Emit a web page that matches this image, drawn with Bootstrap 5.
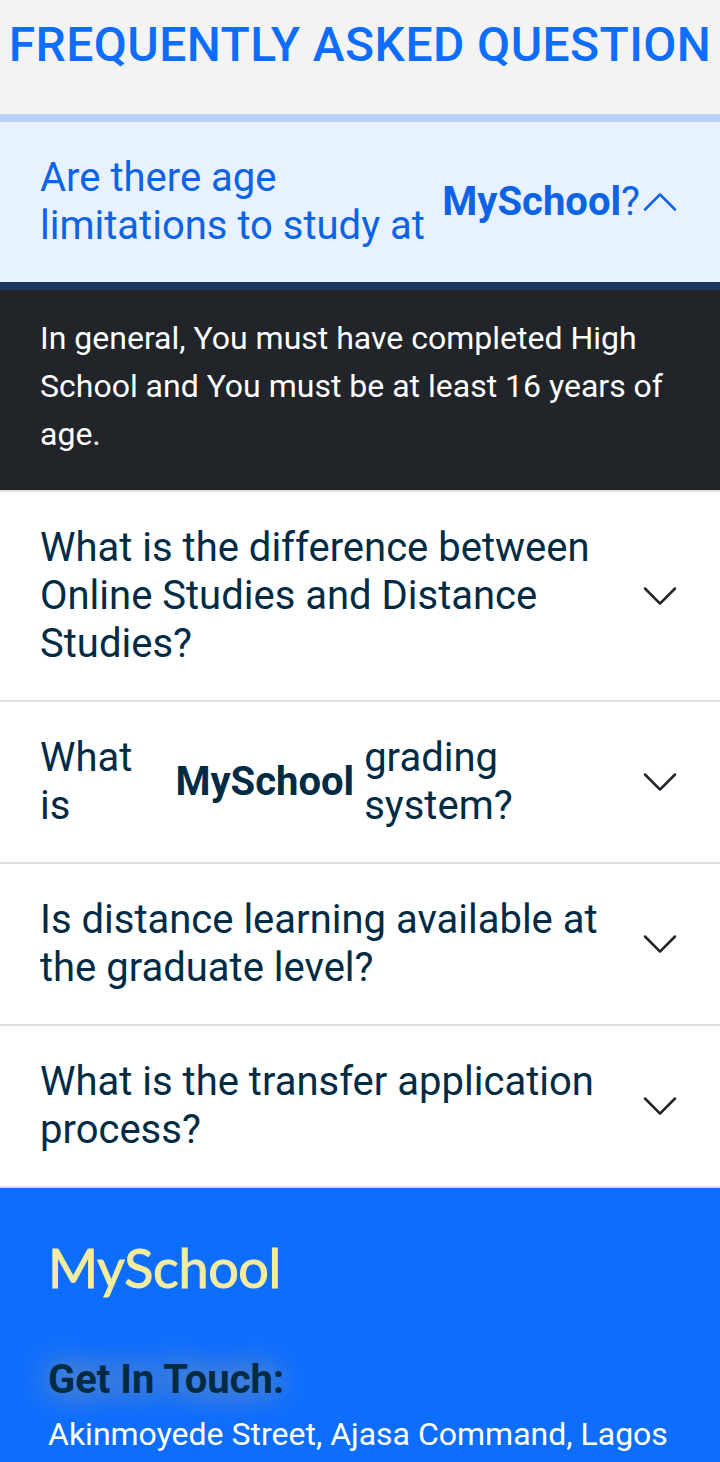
<!DOCTYPE html>
<html lang="en">
<head>
<meta charset="utf-8">
<meta name="viewport" content="width=device-width, initial-scale=1">
<title>MySchool FAQ</title>
<link href="https://cdn.jsdelivr.net/npm/bootstrap@5.3.0/dist/css/bootstrap.min.css" rel="stylesheet">
<style>
html { overflow: hidden; }
body { font-family: Roboto, sans-serif; font-size: 32px; line-height: 1.5; background: #f3f3f3; color: #002b45; overflow: hidden; height: 1462px; }
.faq-title { font-size: 48px; font-weight: 500; line-height: 58px; padding: 16px 0 48px; letter-spacing: .45px; color: #0d6efd; white-space: nowrap; }
.accordion { --bs-accordion-border-width: 0; }
.accordion-item { border: 0; border-bottom: 2px solid #dfdfdf; border-radius: 0 !important; background: #fff; }
.accordion-button { font-size: 40px; line-height: 48px; padding: 32px 40px; color: #002b45; background: #fff; border-radius: 0 !important; }
.accordion-button::after { display: none; }
.accordion-button .chevron { width: 40px; height: 40px; flex: none; margin-left: auto; fill: #212529; }
.accordion-button:not(.collapsed) { color: #0c63e4; background: #e7f1ff; box-shadow: 0 0 0 8px rgba(13,110,253,.25); z-index: 3; position: relative; }
.accordion-button:not(.collapsed) .chevron { transform: rotate(180deg); fill: #0c63e4; }
.accordion-body { padding: 32px 40px; background: #212529; color: #fff; }
.grading-name { margin: 0 10px 0 43px; }
.site-footer { background: #0d6efd; padding: 47px 48px 0; height: 274px; }
.brand { font-family: Lato, sans-serif; font-size: 54px; line-height: 66px; margin-bottom: 55px; letter-spacing: -.4px; color: #f2eca0; -webkit-text-stroke: 1px #f2eca0; }
.touch { font-size: 40px; line-height: 48px; margin: 0 0 6px; color: #002b45; text-shadow: 0 0 32px #c8aa80; }
</style>
</head>
<body>
<h1 class="faq-title text-center m-0">FREQUENTLY ASKED QUESTION</h1>
<div class="accordion">
<div class="accordion-item">
<button class="accordion-button" type="button"><span>Are there age limitations to study at</span><b>MySchool</b>?<svg class="chevron" viewBox="0 0 16 16"><path d="M1.646 4.646a.5.5 0 0 1 .708 0L8 10.293l5.646-5.647a.5.5 0 0 1 .708.708l-6 6a.5.5 0 0 1-.708 0l-6-6a.5.5 0 0 1 0-.708z"/></svg></button>
<div class="accordion-body">In general, You must have completed High School and You must be at least 16 years of age.</div>
</div>
<div class="accordion-item"><button class="accordion-button collapsed" type="button">What is the difference between Online Studies and Distance Studies?<svg class="chevron" viewBox="0 0 16 16"><path d="M1.646 4.646a.5.5 0 0 1 .708 0L8 10.293l5.646-5.647a.5.5 0 0 1 .708.708l-6 6a.5.5 0 0 1-.708 0l-6-6a.5.5 0 0 1 0-.708z"/></svg></button></div>
<div class="accordion-item"><button class="accordion-button collapsed" type="button"><span>What<br>is</span><b class="grading-name">MySchool</b><span>grading<br>system?</span><svg class="chevron" viewBox="0 0 16 16"><path d="M1.646 4.646a.5.5 0 0 1 .708 0L8 10.293l5.646-5.647a.5.5 0 0 1 .708.708l-6 6a.5.5 0 0 1-.708 0l-6-6a.5.5 0 0 1 0-.708z"/></svg></button></div>
<div class="accordion-item"><button class="accordion-button collapsed" type="button">Is distance learning available at the graduate level?<svg class="chevron" viewBox="0 0 16 16"><path d="M1.646 4.646a.5.5 0 0 1 .708 0L8 10.293l5.646-5.647a.5.5 0 0 1 .708.708l-6 6a.5.5 0 0 1-.708 0l-6-6a.5.5 0 0 1 0-.708z"/></svg></button></div>
<div class="accordion-item"><button class="accordion-button collapsed" type="button">What is the transfer application process?<svg class="chevron" viewBox="0 0 16 16"><path d="M1.646 4.646a.5.5 0 0 1 .708 0L8 10.293l5.646-5.647a.5.5 0 0 1 .708.708l-6 6a.5.5 0 0 1-.708 0l-6-6a.5.5 0 0 1 0-.708z"/></svg></button></div>
</div>
<footer class="site-footer">
<div class="brand">MySchool</div>
<h2 class="touch fw-bold">Get In Touch:</h2>
<div class="text-white">Akinmoyede Street, Ajasa Command, Lagos</div>
</footer>
<script src="https://cdn.jsdelivr.net/npm/bootstrap@5.3.0/dist/js/bootstrap.bundle.min.js"></script>
</body>
</html>
